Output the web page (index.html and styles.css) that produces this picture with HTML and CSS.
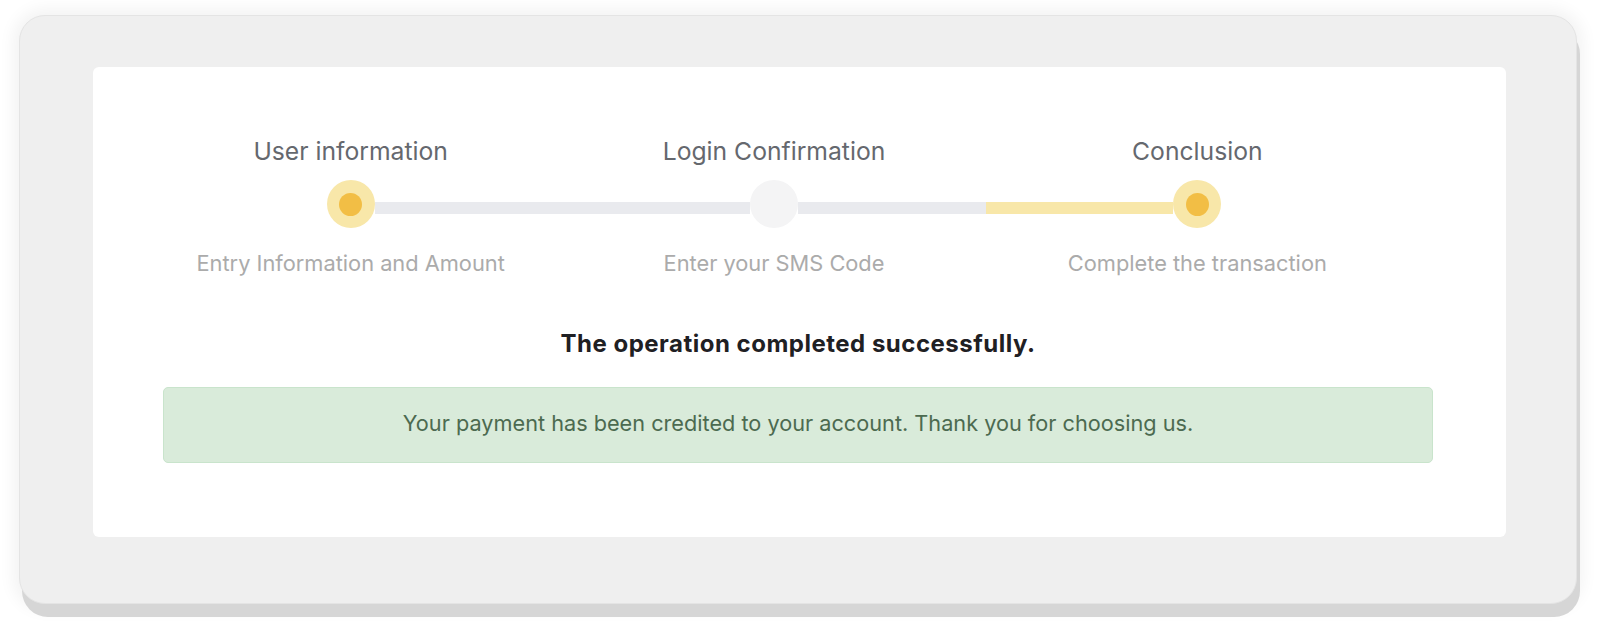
FILE: index.html
```html
<!DOCTYPE html>
<html>
<head>
<meta charset="utf-8">
<title>Payment result</title>
<link rel="stylesheet" href="styles.css">
</head>
<body>
<div class="frame">
  <div class="card">
    <div class="stepper">
      <div class="step step-active">
        <div class="step-title">User information</div>
        <div class="step-track">
          <span class="track-line track-none"></span>
          <span class="step-circle"><span class="step-dot"></span></span>
          <span class="track-line track-grey"></span>
        </div>
        <div class="step-sub">Entry Information and Amount</div>
      </div>
      <div class="step">
        <div class="step-title">Login Confirmation</div>
        <div class="step-track">
          <span class="track-line track-grey"></span>
          <span class="step-circle"></span>
          <span class="track-line track-grey"></span>
        </div>
        <div class="step-sub">Enter your SMS Code</div>
      </div>
      <div class="step step-active">
        <div class="step-title">Conclusion</div>
        <div class="step-track">
          <span class="track-line track-yellow"></span>
          <span class="step-circle"><span class="step-dot"></span></span>
          <span class="track-line track-none"></span>
        </div>
        <div class="step-sub">Complete the transaction</div>
      </div>
    </div>
    <h2 class="result-title">The operation completed successfully.</h2>
    <div class="alert-success">Your payment has been credited to your account. Thank you for choosing us.</div>
  </div>
</div>
</body>
</html>
```
FILE: styles.css
```css
html, body {
  margin: 0;
  background: #ffffff;
}

body {
  box-sizing: border-box;
  min-height: 633px;
  font-family: Inter, "Noto Sans", sans-serif;
  padding: 15px 0 20px 19px;
}

.frame {
  box-sizing: border-box;
  width: 1558px;
  padding: 51px 70px 66px 73px;
  background: #efefef;
  border: 1px solid #e4e4e4;
  border-radius: 26px;
  box-shadow: 3px 13px 0 #d6d6d6, 0 0 16px 6px rgba(0, 0, 0, 0.05);
}

.card {
  background: #ffffff;
  border-radius: 6px;
  padding: 69px 73px 74px 70px;
}

.stepper {
  display: grid;
  grid-template-columns: repeat(3, 1fr);
  margin: 0 24px 0 -24px;
}

.step {
  display: flex;
  flex-direction: column;
  align-items: stretch;
  text-align: center;
}

.step-title {
  font-size: 24.7px;
  line-height: 30px;
  color: #65686e;
}

.step-track {
  display: flex;
  align-items: flex-start;
  margin-top: 14px;
  height: 48px;
}

.track-line {
  flex: 1;
  height: 12px;
  margin-top: 22px;
}

.track-grey { background: #e9eaee; }
.track-yellow { background: #f8e7a9; }
.track-none { background: transparent; }

.step-circle {
  flex: none;
  width: 48px;
  height: 48px;
  border-radius: 50%;
  background: #f4f4f5;
  display: flex;
  align-items: center;
  justify-content: center;
}

.step-active .step-circle {
  background: #f8e7a9;
}

.step-dot {
  width: 23px;
  height: 23px;
  border-radius: 50%;
  background: #f2be45;
}

.step-sub {
  margin-top: 21px;
  font-size: 21.8px;
  line-height: 28px;
  color: #ababab;
}

.result-title {
  margin: 52px 0 0;
  font-size: 24px;
  line-height: 30px;
  font-weight: 700;
  letter-spacing: 0.5px;
  color: #1f2023;
  text-align: center;
}

.alert-success {
  margin-top: 28px;
  padding: 21px 20px 25px;
  background: #d9ebda;
  border: 1px solid #c9e4cc;
  border-radius: 5px;
  font-size: 21.7px;
  line-height: 28px;
  color: #4c6a50;
  text-align: center;
}
```
